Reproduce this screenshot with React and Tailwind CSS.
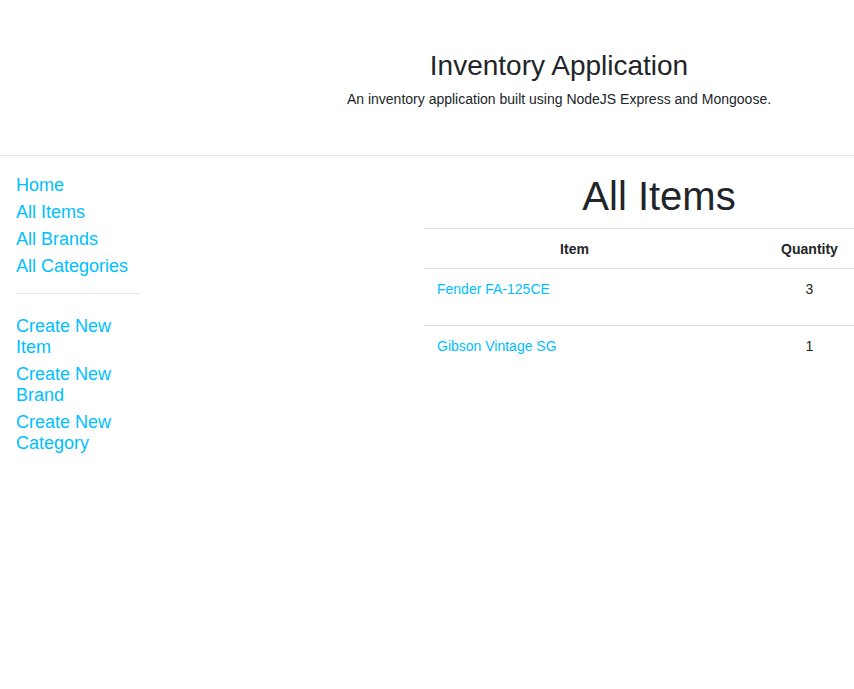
const NAV_MAIN = ['Home', 'All Items', 'All Brands', 'All Categories']
const NAV_CREATE = ['Create New Item', 'Create New Brand', 'Create New Category']

const ITEMS = [
  { name: 'Fender FA-125CE', qty: 3 },
  { name: 'Gibson Vintage SG', qty: 1 },
]

function NavList({ links }) {
  return (
    <ul className="flex flex-col gap-[6px]">
      {links.map(l => (
        <li key={l}>
          <a href="#" className="block text-[18px] leading-[21px] text-[#00bfff]">
            {l}
          </a>
        </li>
      ))}
    </ul>
  )
}

export default function App() {
  return (
    <div className="w-full overflow-hidden bg-white text-[#212529] font-['Liberation_Sans',Arial,sans-serif] min-h-[689px]">
      <div className="w-[1118px]">
        {/* Header */}
        <header className="border-b border-[#e5e5e5] pt-[50px] pb-[48px] text-center">
          <h1 className="text-[28px] leading-[32px] font-normal">Inventory Application</h1>
          <p className="mt-[9px] text-[14px] leading-[16px]">
            An inventory application built using NodeJS Express and Mongoose.
          </p>
        </header>

        <div className="flex">
          {/* Sidebar */}
          <nav className="w-[140px] pl-4 pt-[19px] shrink-0">
            <NavList links={NAV_MAIN} />
            <hr className="mt-[16px] mb-[22px] border-t border-[#e5e5e5]" />
            <NavList links={NAV_CREATE} />
          </nav>

          {/* Main */}
          <main className="ml-[284px] w-[470px] pt-4">
            <h2 className="text-center text-[40px] leading-[48px] font-normal">All Items</h2>
            <table className="mt-2 w-full border-collapse text-[14px]">
              <thead>
                <tr className="border-t border-b border-[#dee2e6]">
                  <th className="w-[301px] pt-[11px] pb-[9px] leading-[19px] font-bold text-center">Item</th>
                  <th className="pt-[11px] pb-[9px] leading-[19px] font-bold text-center">Quantity</th>
                </tr>
              </thead>
              <tbody>
                {ITEMS.map(item => (
                  <tr key={item.name} className="border-t border-[#dee2e6] first:border-t-0">
                    <td className="pl-[13px] pt-[12px] pb-[28px] leading-[16px] align-top">
                      <a href="#" className="text-[#00bfff]">{item.name}</a>
                    </td>
                    <td className="pt-[12px] pb-[28px] leading-[16px] text-center align-top">{item.qty}</td>
                  </tr>
                ))}
              </tbody>
            </table>
          </main>
        </div>
      </div>
    </div>
  )
}
